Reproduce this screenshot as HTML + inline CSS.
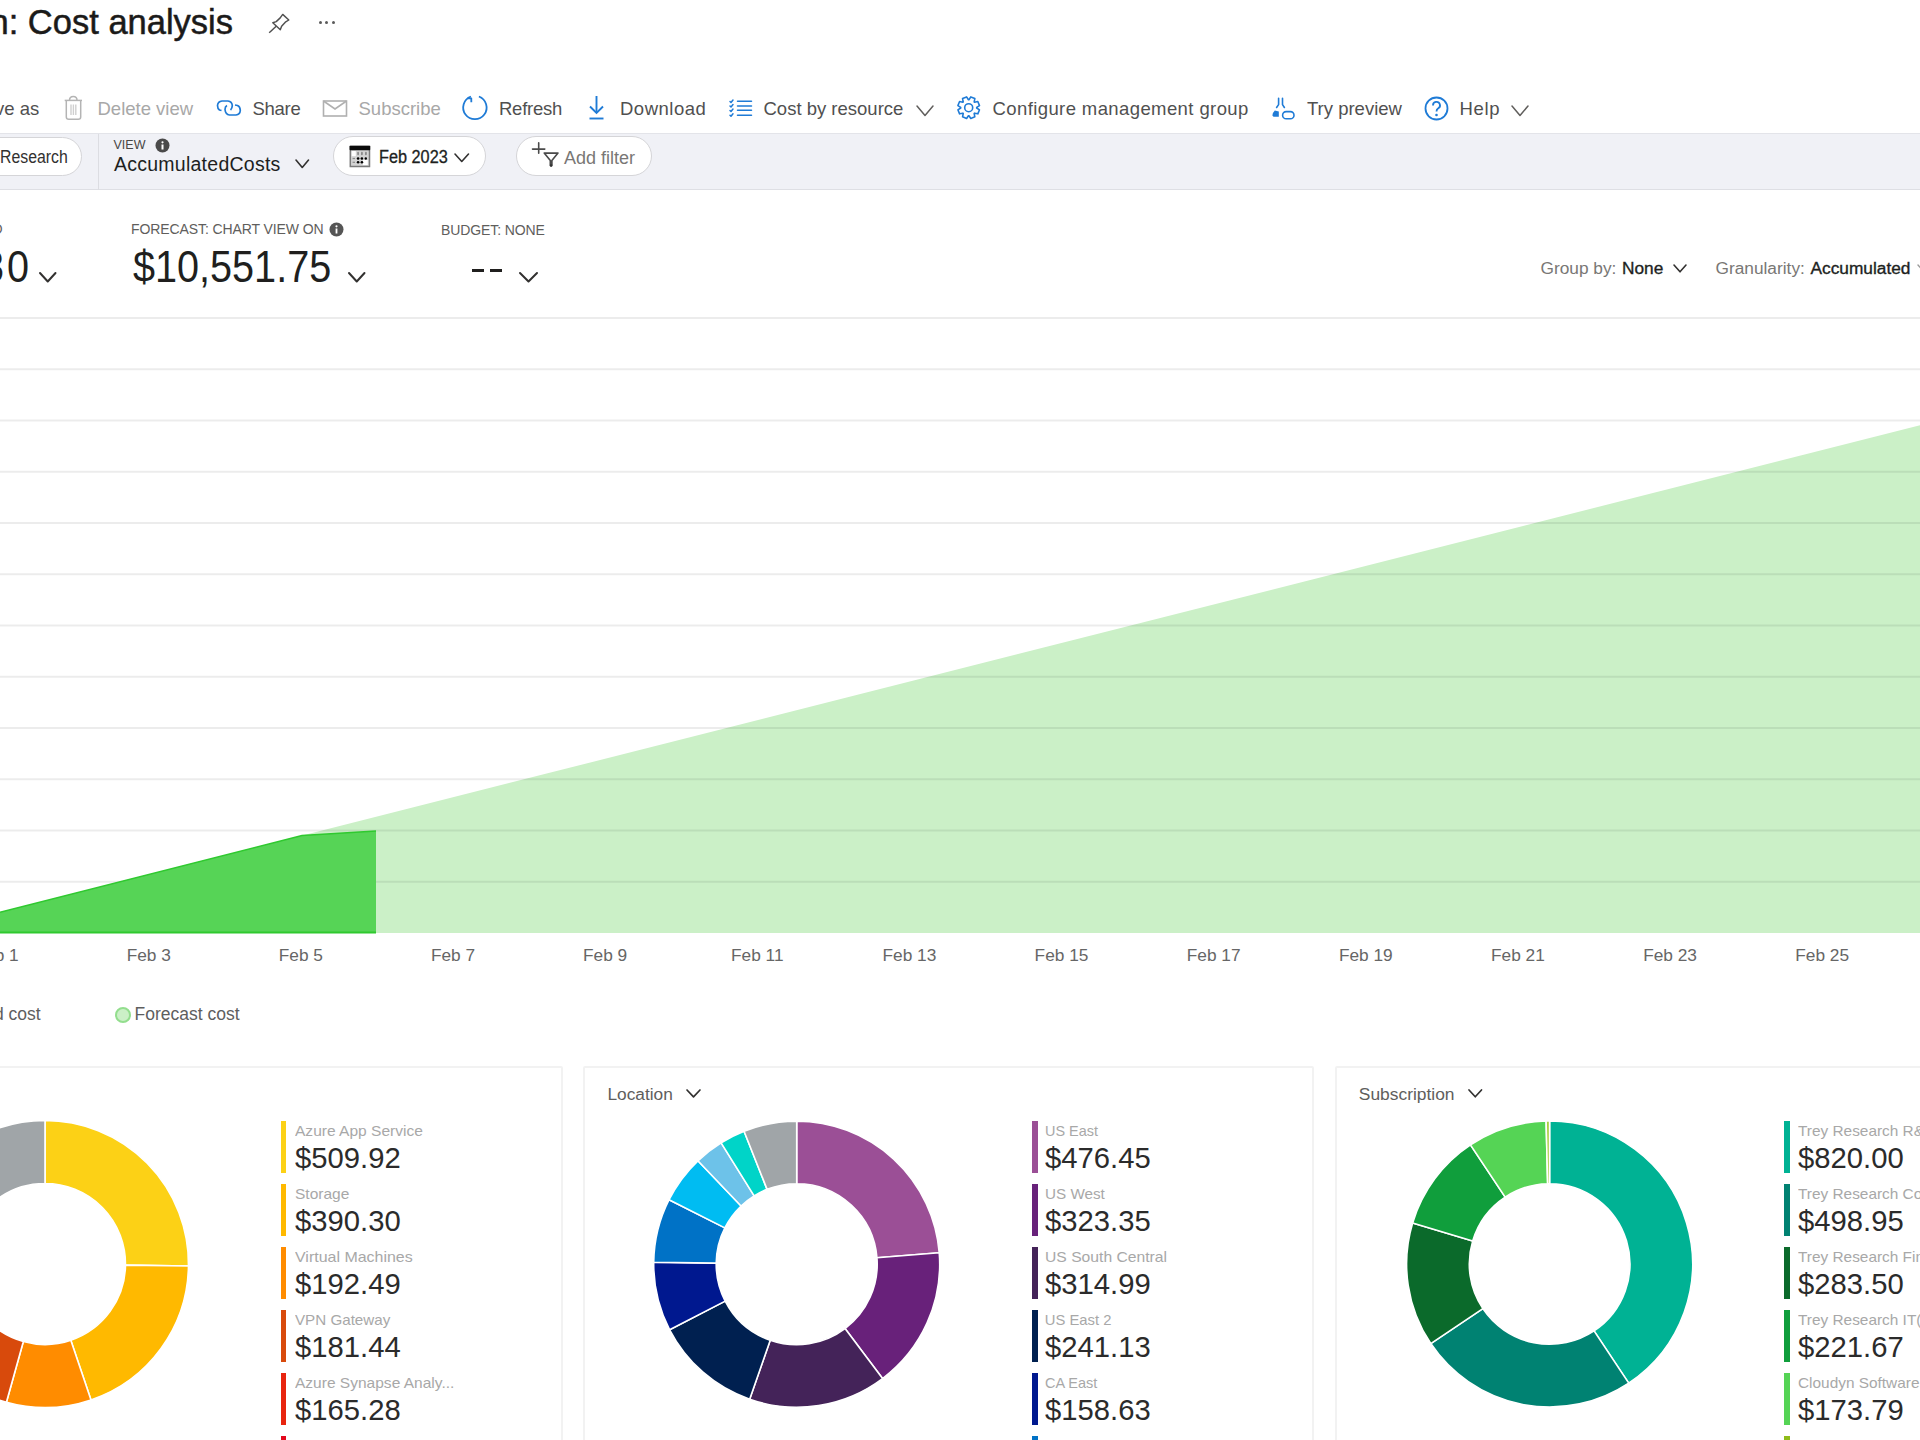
<!DOCTYPE html><html><head><meta charset="utf-8"><style>
html,body{margin:0;padding:0;width:1920px;height:1440px;overflow:hidden;background:#fff;}
body{position:relative;font-family:"Liberation Sans", sans-serif;}
.a{position:absolute;white-space:nowrap;}
svg.a{overflow:visible;}
</style></head><body>
<div class="a " style="left:-10.50px;top:4.50px;font-size:34.5px;line-height:34.5px;color:#1b1a19;font-weight:400;letter-spacing:0px;-webkit-text-stroke:0.5px #1b1a19;">n: Cost analysis</div>
<svg class="a" style="left:266px;top:12px;" width="26" height="24" viewBox="0 0 26 24"><g fill="none" stroke="#505050" stroke-width="1.45" stroke-linejoin="round"><path d="M16.7 2.4 L22.8 8 L19.3 10.2 L15.6 14.3 L14.3 17.8 L6.8 10.8 L10.2 9.6 L14.2 5.9 Z"/><path d="M10.2 14.2 L3.2 20.8"/></g></svg>
<div class="a" style="left:318.7px;top:21.3px;width:3px;height:3px;border-radius:50%;background:#5a5a5a"></div>
<div class="a" style="left:325.3px;top:21.3px;width:3px;height:3px;border-radius:50%;background:#5a5a5a"></div>
<div class="a" style="left:331.9px;top:21.3px;width:3px;height:3px;border-radius:50%;background:#5a5a5a"></div>
<div class="a " style="left:-5.00px;top:100.09px;font-size:18.5px;line-height:18.5px;color:#505050;font-weight:400;letter-spacing:0px;">ve as</div>
<svg class="a" style="left:62px;top:95px;" width="22" height="26" viewBox="0 0 22 26"><g fill="none" stroke="#b4b4b4" stroke-width="1.5"><path d="M2.7 5.4 H20"/><path d="M7.5 5.4 Q7.5 1.5 11.3 1.5 Q15 1.5 15 5.4"/><path d="M4.3 5.4 V22 Q4.3 24.3 6.8 24.3 H16.2 Q18.7 24.3 18.7 22 V5.4"/></g><g stroke="#cfcfcf" stroke-width="1.4"><path d="M9 9.5 V20 M11.4 9.5 V20 M13.8 9.5 V20"/></g></svg>
<div class="a " style="left:97.50px;top:100.09px;font-size:18.5px;line-height:18.5px;color:#a8a8a8;font-weight:400;letter-spacing:0px;">Delete view</div>
<svg class="a" style="left:214px;top:97px;" width="30" height="22" viewBox="0 0 30 22"><g fill="none" stroke="#1f7bd6" stroke-width="1.7" stroke-linejoin="round"><path d="M7.5 13.5 L5.5 13 Q3.5 11.5 3.5 8.5 Q3.8 4.5 8 4 H14 Q18 4.5 18.3 8.5 Q18.2 11.5 16.5 13"/><path d="M13 8.5 Q11 9.5 11 12.5 Q11.5 17.5 15.5 18 H22 Q26 17.5 26.3 13.5 Q26.2 9.5 23.5 8.5 L21 8"/></g></svg>
<div class="a " style="left:252.50px;top:100.09px;font-size:18.5px;line-height:18.5px;color:#505050;font-weight:400;letter-spacing:-0.3px;">Share</div>
<svg class="a" style="left:322px;top:99px;" width="27" height="19" viewBox="0 0 27 19"><g fill="none" stroke="#b0b0b0" stroke-width="1.6"><rect x="1.5" y="2" width="23" height="15"/><path d="M1.5 2 L13 10 L24.5 2"/></g></svg>
<div class="a " style="left:358.50px;top:100.09px;font-size:18.5px;line-height:18.5px;color:#a8a8a8;font-weight:400;letter-spacing:0px;">Subscribe</div>
<svg class="a" style="left:460px;top:94px;" width="30" height="28" viewBox="0 0 30 28"><g fill="none" stroke="#1f7bd6" stroke-width="1.8" stroke-linejoin="round"><path d="M18.9 2.5 A11.7 11.7 0 1 1 10.9 2.5"/><path d="M7.6 4.3 H11.3 V8.3"/></g></svg>
<div class="a " style="left:499.00px;top:100.09px;font-size:18.5px;line-height:18.5px;color:#505050;font-weight:400;letter-spacing:-0.25px;">Refresh</div>
<svg class="a" style="left:586px;top:94px;" width="22" height="28" viewBox="0 0 22 28"><g fill="none" stroke="#1f7bd6" stroke-width="1.9"><path d="M10.5 2 V19"/><path d="M4 12.5 L10.5 19 L17 12.5"/><path d="M3.5 24.5 H17.5"/></g></svg>
<div class="a " style="left:620.00px;top:100.09px;font-size:18.5px;line-height:18.5px;color:#505050;font-weight:400;letter-spacing:0.5px;">Download</div>
<svg class="a" style="left:728px;top:98px;" width="26" height="20" viewBox="0 0 26 20"><g fill="none" stroke="#1f7bd6" stroke-width="1.5" stroke-linecap="round" stroke-linejoin="round"><path d="M9.5 3.3 H23.5 M9.5 7.9 H23.5 M9.5 12.2 H23.5 M9.5 17.2 H23.5"/><path d="M2 3.5 L3 4.5 L5 2 M2 8 L3 9 L5 6.5 M2 12.5 L3 13.5 L5 11 M2 17.3 L3 18.3 L5 15.8"/></g></svg>
<div class="a " style="left:763.50px;top:100.09px;font-size:18.5px;line-height:18.5px;color:#505050;font-weight:400;letter-spacing:0px;">Cost by resource</div>
<svg class="a" style="left:915px;top:104px;" width="20" height="13.5" viewBox="0 0 20 13.5"><polyline points="2,2 10.00,11.50 18.00,2" fill="none" stroke="#605e5c" stroke-width="1.5" stroke-linecap="round" stroke-linejoin="round"/></svg>
<svg class="a" style="left:956px;top:96px;" width="24" height="24" viewBox="0 0 24 24"><g fill="none" stroke="#1f7bd6" stroke-width="1.6" stroke-linejoin="round"><polygon points="23.50,13.81 21.82,17.84 18.54,17.17 18.17,17.54 18.84,20.82 14.81,22.50 12.96,19.70 12.44,19.70 10.59,22.50 6.56,20.82 7.23,17.54 6.86,17.17 3.58,17.84 1.90,13.81 4.70,11.96 4.70,11.44 1.90,9.59 3.58,5.56 6.86,6.23 7.23,5.86 6.56,2.58 10.59,0.90 12.44,3.70 12.96,3.70 14.81,0.90 18.84,2.58 18.17,5.86 18.54,6.23 21.82,5.56 23.50,9.59 20.70,11.44 20.70,11.96"/><circle cx="12.7" cy="11.7" r="4"/></g></svg>
<div class="a " style="left:992.50px;top:100.09px;font-size:18.5px;line-height:18.5px;color:#505050;font-weight:400;letter-spacing:0.4px;">Configure management group</div>
<svg class="a" style="left:1269px;top:94px;" width="30" height="28" viewBox="0 0 30 28"><g fill="none" stroke="#1f7bd6" stroke-width="1.6" stroke-linecap="round" stroke-linejoin="round"><path d="M9.6 4.2 V10.6 L7.6 13.5"/><path d="M13.5 4.2 V10.6 L15.4 13.5"/><rect x="13.6" y="17.6" width="11.4" height="7.2" rx="3.6"/></g><path d="M3.4 21.5 Q3.6 18.5 5.8 16.5 L9.8 17.5 L9.8 22.8 L4.5 22.8 Z" fill="#1f7bd6"/></svg>
<div class="a " style="left:1307.00px;top:100.09px;font-size:18.5px;line-height:18.5px;color:#505050;font-weight:400;letter-spacing:0px;">Try preview</div>
<svg class="a" style="left:1424px;top:96px;" width="25" height="25" viewBox="0 0 25 25"><g fill="none" stroke="#1f7bd6" stroke-width="1.8"><circle cx="12.5" cy="12.5" r="11"/><path d="M9 9.5 A3.5 3.5 0 1 1 14 12.5 Q12.5 13.5 12.5 15.5"/></g><circle cx="12.5" cy="19" r="1.3" fill="#1f7bd6"/></svg>
<div class="a " style="left:1459.50px;top:100.09px;font-size:18.5px;line-height:18.5px;color:#505050;font-weight:400;letter-spacing:0.7px;">Help</div>
<svg class="a" style="left:1510px;top:104px;" width="20" height="13.5" viewBox="0 0 20 13.5"><polyline points="2,2 10.00,11.50 18.00,2" fill="none" stroke="#605e5c" stroke-width="1.5" stroke-linecap="round" stroke-linejoin="round"/></svg>
<div class="a" style="left:0;top:133px;width:1920px;height:57px;background:#f0f1f6;border-top:1px solid #e3e4e9;border-bottom:1.5px solid #dedfe4;box-sizing:border-box"></div>
<div class="a" style="left:-40px;top:136.5px;width:122px;height:39px;border-radius:20px;background:#fff;border:1.5px solid #d5d5d8;box-sizing:border-box"></div>
<div class="a " style="left:-0.50px;top:148.69px;font-size:17.5px;line-height:17.5px;color:#323130;font-weight:400;letter-spacing:0px;transform:scaleX(0.905);transform-origin:0 0;">Research</div>
<div class="a" style="left:97.5px;top:134px;width:1.5px;height:56px;background:#dcdde2"></div>
<div class="a " style="left:113.50px;top:138.92px;font-size:12.5px;line-height:12.5px;color:#484644;font-weight:400;letter-spacing:0px;">VIEW</div>
<svg class="a" style="left:155px;top:138px;" width="15" height="15" viewBox="0 0 15 15"><circle cx="7.5" cy="7.5" r="7" fill="#4a4a4a"/><rect x="6.5" y="6.5" width="2" height="5" fill="#fff"/><circle cx="7.5" cy="4.3" r="1.1" fill="#fff"/></svg>
<div class="a " style="left:114.00px;top:154.79px;font-size:19.5px;line-height:19.5px;color:#201f1e;font-weight:400;letter-spacing:0.25px;">AccumulatedCosts</div>
<svg class="a" style="left:294px;top:158px;" width="16.5" height="11.5" viewBox="0 0 16.5 11.5"><polyline points="2,2 8.25,9.50 14.50,2" fill="none" stroke="#323130" stroke-width="1.6" stroke-linecap="round" stroke-linejoin="round"/></svg>
<div class="a" style="left:333px;top:136.3px;width:152.5px;height:40px;border-radius:20px;background:#fff;border:1.5px solid #d5d5d8;box-sizing:border-box"></div>
<svg class="a" style="left:349px;top:145px;" width="22" height="22" viewBox="0 0 22 22"><rect x="1.3" y="1.5" width="19.2" height="20" fill="#d4d4d4" stroke="#7a7a7a" stroke-width="1.5"/><rect x="0.6" y="0.8" width="20.6" height="4.4" rx="0.8" fill="#0a0a0a"/><rect x="2.8" y="6" width="4" height="5.2" fill="#fff"/><rect x="13.8" y="15" width="5" height="5" fill="#fff"/><g fill="#8a8a8a"><rect x="8.2" y="6.8" width="1.8" height="3.4" rx="0.9"/><rect x="12" y="6.8" width="1.8" height="3.4" rx="0.9"/><rect x="16" y="6.8" width="1.8" height="3.4" rx="0.9"/><rect x="3.6" y="12.9" width="2.4" height="1.2"/><rect x="3.6" y="16.7" width="2.4" height="1.2"/></g><g fill="#000"><circle cx="9.1" cy="13.5" r="1.3"/><circle cx="12.9" cy="13.5" r="1.3"/><circle cx="16.8" cy="13.5" r="1.2"/><circle cx="9.1" cy="17.3" r="1.3"/><circle cx="12.9" cy="17.3" r="1.3"/></g></svg>
<div class="a " style="left:378.50px;top:148.99px;font-size:17.5px;line-height:17.5px;color:#201f1e;font-weight:400;letter-spacing:0px;transform:scaleX(0.93);transform-origin:0 0;-webkit-text-stroke:0.3px #201f1e;">Feb 2023</div>
<svg class="a" style="left:453px;top:151.5px;" width="17.5" height="11.5" viewBox="0 0 17.5 11.5"><polyline points="2,2 8.75,9.50 15.50,2" fill="none" stroke="#323130" stroke-width="1.6" stroke-linecap="round" stroke-linejoin="round"/></svg>
<div class="a" style="left:515.5px;top:136.3px;width:136.5px;height:40px;border-radius:20px;background:#fff;border:1.5px solid #d5d5d8;box-sizing:border-box"></div>
<svg class="a" style="left:531px;top:141px;" width="30" height="27" viewBox="0 0 30 27"><g fill="none" stroke="#4a4a4a" stroke-width="1.6" stroke-linejoin="round" stroke-linecap="round"><path d="M7.7 1.8 V12.3 M1.5 8.1 H13.8"/><path d="M13.2 12.1 H27 L20.9 19.6 L20.9 24 M13.2 12.1 L19.3 19.6 V24"/></g><circle cx="20.1" cy="24.6" r="1.4" fill="#333"/></svg>
<div class="a " style="left:564.00px;top:148.56px;font-size:18px;line-height:18px;color:#797775;font-weight:400;letter-spacing:0px;">Add filter</div>
<div class="a " style="left:-7.50px;top:222.15px;font-size:14px;line-height:14px;color:#605e5c;font-weight:400;letter-spacing:0px;">D</div>
<div class="a " style="left:-18.50px;top:244.75px;font-size:44px;line-height:44px;color:#201f1e;font-weight:400;letter-spacing:0px;transform:scaleX(0.9);transform-origin:0 0;">3</div>
<div class="a " style="left:6.70px;top:244.75px;font-size:44px;line-height:44px;color:#201f1e;font-weight:400;letter-spacing:0px;transform:scaleX(0.9);transform-origin:0 0;">0</div>
<svg class="a" style="left:38px;top:271px;" width="19.5" height="12.5" viewBox="0 0 19.5 12.5"><polyline points="2,2 9.75,10.50 17.50,2" fill="none" stroke="#323130" stroke-width="2" stroke-linecap="round" stroke-linejoin="round"/></svg>
<div class="a " style="left:131.00px;top:222.15px;font-size:14px;line-height:14px;color:#605e5c;font-weight:400;letter-spacing:-0.1px;">FORECAST: CHART VIEW ON</div>
<svg class="a" style="left:329px;top:222px;" width="15" height="15" viewBox="0 0 15 15"><circle cx="7.5" cy="7.5" r="7" fill="#555"/><rect x="6.6" y="6.5" width="1.8" height="5" fill="#fff"/><circle cx="7.5" cy="4.3" r="1.1" fill="#fff"/></svg>
<div class="a " style="left:132.50px;top:244.75px;font-size:44px;line-height:44px;color:#201f1e;font-weight:400;letter-spacing:0px;transform:scaleX(0.9);transform-origin:0 0;">$10,551.75</div>
<svg class="a" style="left:347px;top:271px;" width="19.5" height="12.5" viewBox="0 0 19.5 12.5"><polyline points="2,2 9.75,10.50 17.50,2" fill="none" stroke="#323130" stroke-width="2" stroke-linecap="round" stroke-linejoin="round"/></svg>
<div class="a " style="left:441.00px;top:223.15px;font-size:14px;line-height:14px;color:#605e5c;font-weight:400;letter-spacing:-0.1px;">BUDGET: NONE</div>
<div class="a" style="left:472px;top:269px;width:12px;height:2.5px;background:#201f1e"></div>
<div class="a" style="left:490px;top:269px;width:12px;height:2.5px;background:#201f1e"></div>
<svg class="a" style="left:518px;top:271px;" width="21" height="12.5" viewBox="0 0 21 12.5"><polyline points="2,2 10.50,10.50 19.00,2" fill="none" stroke="#323130" stroke-width="2" stroke-linecap="round" stroke-linejoin="round"/></svg>
<div class="a " style="left:1540.50px;top:259.96px;font-size:17.3px;line-height:17.3px;color:#797775;font-weight:400;letter-spacing:0px;">Group by:</div>
<div class="a " style="left:1622.00px;top:259.96px;font-size:17.3px;line-height:17.3px;color:#201f1e;font-weight:400;letter-spacing:0px;-webkit-text-stroke:0.35px #201f1e;">None</div>
<svg class="a" style="left:1671.5px;top:263px;" width="16.0" height="10.800000000000011" viewBox="0 0 16.0 10.800000000000011"><polyline points="2,2 8.00,8.80 14.00,2" fill="none" stroke="#323130" stroke-width="1.6" stroke-linecap="round" stroke-linejoin="round"/></svg>
<div class="a " style="left:1715.50px;top:259.96px;font-size:17.3px;line-height:17.3px;color:#797775;font-weight:400;letter-spacing:0px;">Granularity:</div>
<svg class="a" style="left:1915.5px;top:263px;" width="16.0" height="10.800000000000011" viewBox="0 0 16.0 10.800000000000011"><polyline points="2,2 8.00,8.80 14.00,2" fill="none" stroke="#9a9a9a" stroke-width="1.4" stroke-linecap="round" stroke-linejoin="round"/></svg>
<div class="a " style="left:1810.50px;top:259.96px;font-size:17.3px;line-height:17.3px;color:#201f1e;font-weight:400;letter-spacing:0px;-webkit-text-stroke:0.35px #201f1e;">Accumulated</div>
<svg class="a" style="left:0;top:0" width="1920" height="1440">
<polygon points="0,933 0,912.2 1920,425.3 1920,933" fill="#cbf0c7"/>
<rect x="0" y="317.00" width="1920" height="2" fill="rgba(0,0,0,0.075)"/><rect x="0" y="368.25" width="1920" height="2" fill="rgba(0,0,0,0.075)"/><rect x="0" y="419.50" width="1920" height="2" fill="rgba(0,0,0,0.075)"/><rect x="0" y="470.75" width="1920" height="2" fill="rgba(0,0,0,0.075)"/><rect x="0" y="522.00" width="1920" height="2" fill="rgba(0,0,0,0.075)"/><rect x="0" y="573.25" width="1920" height="2" fill="rgba(0,0,0,0.075)"/><rect x="0" y="624.50" width="1920" height="2" fill="rgba(0,0,0,0.075)"/><rect x="0" y="675.75" width="1920" height="2" fill="rgba(0,0,0,0.075)"/><rect x="0" y="727.00" width="1920" height="2" fill="rgba(0,0,0,0.075)"/><rect x="0" y="778.25" width="1920" height="2" fill="rgba(0,0,0,0.075)"/><rect x="0" y="829.50" width="1920" height="2" fill="rgba(0,0,0,0.075)"/><rect x="0" y="880.75" width="1920" height="2" fill="rgba(0,0,0,0.075)"/>
<polygon points="0,933 0,912.2 302,835.6 376,831 376,933" fill="#56d456"/>
<polyline points="0,912.2 302,835.6 376,831" fill="none" stroke="#2fc92f" stroke-width="1.5"/>
<line x1="0" y1="932.5" x2="376" y2="932.5" stroke="#2fc92f" stroke-width="2"/>
</svg>
<div class="a" style="left:-63.38px;top:947.21px;width:120px;text-align:center;font-size:17.3px;line-height:17px;color:#666">Feb 1</div>
<div class="a" style="left:88.75px;top:947.21px;width:120px;text-align:center;font-size:17.3px;line-height:17px;color:#666">Feb 3</div>
<div class="a" style="left:240.88px;top:947.21px;width:120px;text-align:center;font-size:17.3px;line-height:17px;color:#666">Feb 5</div>
<div class="a" style="left:393.01px;top:947.21px;width:120px;text-align:center;font-size:17.3px;line-height:17px;color:#666">Feb 7</div>
<div class="a" style="left:545.14px;top:947.21px;width:120px;text-align:center;font-size:17.3px;line-height:17px;color:#666">Feb 9</div>
<div class="a" style="left:697.27px;top:947.21px;width:120px;text-align:center;font-size:17.3px;line-height:17px;color:#666">Feb 11</div>
<div class="a" style="left:849.40px;top:947.21px;width:120px;text-align:center;font-size:17.3px;line-height:17px;color:#666">Feb 13</div>
<div class="a" style="left:1001.53px;top:947.21px;width:120px;text-align:center;font-size:17.3px;line-height:17px;color:#666">Feb 15</div>
<div class="a" style="left:1153.66px;top:947.21px;width:120px;text-align:center;font-size:17.3px;line-height:17px;color:#666">Feb 17</div>
<div class="a" style="left:1305.79px;top:947.21px;width:120px;text-align:center;font-size:17.3px;line-height:17px;color:#666">Feb 19</div>
<div class="a" style="left:1457.92px;top:947.21px;width:120px;text-align:center;font-size:17.3px;line-height:17px;color:#666">Feb 21</div>
<div class="a" style="left:1610.05px;top:947.21px;width:120px;text-align:center;font-size:17.3px;line-height:17px;color:#666">Feb 23</div>
<div class="a" style="left:1762.18px;top:947.21px;width:120px;text-align:center;font-size:17.3px;line-height:17px;color:#666">Feb 25</div>
<div class="a " style="left:-6.00px;top:1005.69px;font-size:17.5px;line-height:17.5px;color:#5e5e5e;font-weight:400;letter-spacing:0px;">d cost</div>
<div class="a" style="left:114.7px;top:1006.7px;width:16px;height:16px;border-radius:50%;background:#cbf0c7;border:2px solid #93de8e;box-sizing:border-box"></div>
<div class="a " style="left:134.50px;top:1005.69px;font-size:17.5px;line-height:17.5px;color:#5e5e5e;font-weight:400;letter-spacing:0px;">Forecast cost</div>
<div class="a" style="left:-20px;top:1065.6px;width:582.5px;height:420px;border:2px solid #f2f2f2;border-radius:2px;box-sizing:border-box"></div>
<div class="a" style="left:583.3px;top:1065.6px;width:730.4000000000001px;height:420px;border:2px solid #f2f2f2;border-radius:2px;box-sizing:border-box"></div>
<div class="a" style="left:1334.6px;top:1065.6px;width:625.4000000000001px;height:420px;border:2px solid #f2f2f2;border-radius:2px;box-sizing:border-box"></div>
<div class="a " style="left:607.50px;top:1085.96px;font-size:17.3px;line-height:17.3px;color:#605e5c;font-weight:400;letter-spacing:0px;">Location</div>
<svg class="a" style="left:684.5px;top:1088px;" width="17.0" height="10.799999999999955" viewBox="0 0 17.0 10.799999999999955"><polyline points="2,2 8.50,8.80 15.00,2" fill="none" stroke="#323130" stroke-width="1.7" stroke-linecap="round" stroke-linejoin="round"/></svg>
<div class="a " style="left:1358.80px;top:1085.67px;font-size:17.4px;line-height:17.4px;color:#605e5c;font-weight:400;letter-spacing:0px;">Subscription</div>
<svg class="a" style="left:1466.5px;top:1088px;" width="16.5" height="10.799999999999955" viewBox="0 0 16.5 10.799999999999955"><polyline points="2,2 8.25,8.80 14.50,2" fill="none" stroke="#323130" stroke-width="1.7" stroke-linecap="round" stroke-linejoin="round"/></svg>
<svg class="a" style="left:0;top:0" width="1920" height="1440"><path d="M45.00 1120.50 A143.5 143.5 0 0 1 188.49 1266.00 L125.49 1265.12 A80.5 80.5 0 0 0 45.00 1183.50 Z" fill="#fcd116" stroke="#fff" stroke-width="1.6" stroke-linejoin="bevel"/><path d="M188.49 1266.00 A143.5 143.5 0 0 1 91.01 1399.92 L70.81 1340.25 A80.5 80.5 0 0 0 125.49 1265.12 Z" fill="#ffb900" stroke="#fff" stroke-width="1.6" stroke-linejoin="bevel"/><path d="M91.01 1399.92 A143.5 143.5 0 0 1 6.41 1402.21 L23.35 1341.53 A80.5 80.5 0 0 0 70.81 1340.25 Z" fill="#ff8c00" stroke="#fff" stroke-width="1.6" stroke-linejoin="bevel"/><path d="M6.41 1402.21 A143.5 143.5 0 0 1 -61.64 1360.02 L-14.82 1317.87 A80.5 80.5 0 0 0 23.35 1341.53 Z" fill="#d84a0c" stroke="#fff" stroke-width="1.6" stroke-linejoin="bevel"/><path d="M-61.64 1360.02 A143.5 143.5 0 0 1 -95.36 1293.84 L-33.74 1280.74 A80.5 80.5 0 0 0 -14.82 1317.87 Z" fill="#e8250f" stroke="#fff" stroke-width="1.6" stroke-linejoin="bevel"/><path d="M-95.36 1293.84 A143.5 143.5 0 0 1 -96.32 1239.08 L-34.28 1250.02 A80.5 80.5 0 0 0 -33.74 1280.74 Z" fill="#a80000" stroke="#fff" stroke-width="1.6" stroke-linejoin="bevel"/><path d="M-96.32 1239.08 A143.5 143.5 0 0 1 -79.27 1192.25 L-24.72 1223.75 A80.5 80.5 0 0 0 -34.28 1250.02 Z" fill="#b4009e" stroke="#fff" stroke-width="1.6" stroke-linejoin="bevel"/><path d="M-79.27 1192.25 A143.5 143.5 0 0 1 -51.02 1157.36 L-8.87 1204.18 A80.5 80.5 0 0 0 -24.72 1223.75 Z" fill="#5c2d91" stroke="#fff" stroke-width="1.6" stroke-linejoin="bevel"/><path d="M-51.02 1157.36 A143.5 143.5 0 0 1 45.00 1120.50 L45.00 1183.50 A80.5 80.5 0 0 0 -8.87 1204.18 Z" fill="#a0a5a8" stroke="#fff" stroke-width="1.6" stroke-linejoin="bevel"/><path d="M796.70 1121.20 A143 143 0 0 1 939.24 1252.73 L876.94 1257.74 A80.5 80.5 0 0 0 796.70 1183.70 Z" fill="#9b4f96" stroke="#fff" stroke-width="1.6" stroke-linejoin="bevel"/><path d="M939.24 1252.73 A143 143 0 0 1 882.56 1378.55 L845.03 1328.57 A80.5 80.5 0 0 0 876.94 1257.74 Z" fill="#68217a" stroke="#fff" stroke-width="1.6" stroke-linejoin="bevel"/><path d="M882.56 1378.55 A143 143 0 0 1 749.67 1399.25 L770.23 1340.22 A80.5 80.5 0 0 0 845.03 1328.57 Z" fill="#442359" stroke="#fff" stroke-width="1.6" stroke-linejoin="bevel"/><path d="M749.67 1399.25 A143 143 0 0 1 669.63 1329.79 L725.17 1301.12 A80.5 80.5 0 0 0 770.23 1340.22 Z" fill="#002050" stroke="#fff" stroke-width="1.6" stroke-linejoin="bevel"/><path d="M669.63 1329.79 A143 143 0 0 1 653.71 1262.20 L716.21 1263.08 A80.5 80.5 0 0 0 725.17 1301.12 Z" fill="#00188f" stroke="#fff" stroke-width="1.6" stroke-linejoin="bevel"/><path d="M653.71 1262.20 A143 143 0 0 1 669.06 1199.72 L724.85 1227.90 A80.5 80.5 0 0 0 716.21 1263.08 Z" fill="#0072c6" stroke="#fff" stroke-width="1.6" stroke-linejoin="bevel"/><path d="M669.06 1199.72 A143 143 0 0 1 697.90 1160.82 L741.08 1206.00 A80.5 80.5 0 0 0 724.85 1227.90 Z" fill="#00bcf2" stroke="#fff" stroke-width="1.6" stroke-linejoin="bevel"/><path d="M697.90 1160.82 A143 143 0 0 1 721.13 1142.80 L754.16 1195.86 A80.5 80.5 0 0 0 741.08 1206.00 Z" fill="#6dc2e9" stroke="#fff" stroke-width="1.6" stroke-linejoin="bevel"/><path d="M721.13 1142.80 A143 143 0 0 1 744.06 1131.24 L767.07 1189.35 A80.5 80.5 0 0 0 754.16 1195.86 Z" fill="#00d4c8" stroke="#fff" stroke-width="1.6" stroke-linejoin="bevel"/><path d="M744.06 1131.24 A143 143 0 0 1 796.70 1121.20 L796.70 1183.70 A80.5 80.5 0 0 0 767.07 1189.35 Z" fill="#a0a5a8" stroke="#fff" stroke-width="1.6" stroke-linejoin="bevel"/><path d="M1549.60 1121.00 A143 143 0 0 1 1628.73 1383.11 L1594.04 1330.88 A80.3 80.3 0 0 0 1549.60 1183.70 Z" fill="#00b294" stroke="#fff" stroke-width="1.6" stroke-linejoin="bevel"/><path d="M1628.73 1383.11 A143 143 0 0 1 1430.77 1343.55 L1482.87 1308.67 A80.3 80.3 0 0 0 1594.04 1330.88 Z" fill="#008272" stroke="#fff" stroke-width="1.6" stroke-linejoin="bevel"/><path d="M1430.77 1343.55 A143 143 0 0 1 1412.63 1222.91 L1472.69 1240.92 A80.3 80.3 0 0 0 1482.87 1308.67 Z" fill="#0b6a2b" stroke="#fff" stroke-width="1.6" stroke-linejoin="bevel"/><path d="M1412.63 1222.91 A143 143 0 0 1 1470.47 1144.89 L1505.16 1197.12 A80.3 80.3 0 0 0 1472.69 1240.92 Z" fill="#109e3c" stroke="#fff" stroke-width="1.6" stroke-linejoin="bevel"/><path d="M1470.47 1144.89 A143 143 0 0 1 1546.11 1121.04 L1547.64 1183.72 A80.3 80.3 0 0 0 1505.16 1197.12 Z" fill="#55d455" stroke="#fff" stroke-width="1.6" stroke-linejoin="bevel"/><path d="M1546.11 1121.04 A143 143 0 0 1 1549.60 1121.00 L1549.60 1183.70 A80.3 80.3 0 0 0 1547.64 1183.72 Z" fill="#a9cf3a" stroke="#fff" stroke-width="1.6" stroke-linejoin="bevel"/></svg>
<div class="a" style="left:280.50px;top:1121.25px;width:5.8px;height:52px;background:#fcd116"></div>
<div class="a " style="left:294.50px;top:1123.92px;font-size:14.8px;line-height:14.8px;color:#a8a8a8;font-weight:400;letter-spacing:0px;transform:scaleX(1.051);transform-origin:0 0;">Azure App Service</div>
<div class="a " style="left:295.00px;top:1142.65px;font-size:30px;line-height:30px;color:#2b2b2b;font-weight:400;letter-spacing:0px;transform:scaleX(0.975);transform-origin:0 0;">$509.92</div>
<div class="a" style="left:280.50px;top:1184.25px;width:5.8px;height:52px;background:#ffb900"></div>
<div class="a " style="left:294.50px;top:1186.92px;font-size:14.8px;line-height:14.8px;color:#a8a8a8;font-weight:400;letter-spacing:0px;transform:scaleX(1.048);transform-origin:0 0;">Storage</div>
<div class="a " style="left:295.00px;top:1205.65px;font-size:30px;line-height:30px;color:#2b2b2b;font-weight:400;letter-spacing:0px;transform:scaleX(0.975);transform-origin:0 0;">$390.30</div>
<div class="a" style="left:280.50px;top:1247.25px;width:5.8px;height:52px;background:#ff8c00"></div>
<div class="a " style="left:294.50px;top:1249.92px;font-size:14.8px;line-height:14.8px;color:#a8a8a8;font-weight:400;letter-spacing:0px;transform:scaleX(1.079);transform-origin:0 0;">Virtual Machines</div>
<div class="a " style="left:295.00px;top:1268.65px;font-size:30px;line-height:30px;color:#2b2b2b;font-weight:400;letter-spacing:0px;transform:scaleX(0.975);transform-origin:0 0;">$192.49</div>
<div class="a" style="left:280.50px;top:1310.25px;width:5.8px;height:52px;background:#d84a0c"></div>
<div class="a " style="left:294.50px;top:1312.92px;font-size:14.8px;line-height:14.8px;color:#a8a8a8;font-weight:400;letter-spacing:0px;transform:scaleX(1.025);transform-origin:0 0;">VPN Gateway</div>
<div class="a " style="left:295.00px;top:1331.65px;font-size:30px;line-height:30px;color:#2b2b2b;font-weight:400;letter-spacing:0px;transform:scaleX(0.975);transform-origin:0 0;">$181.44</div>
<div class="a" style="left:280.50px;top:1373.25px;width:5.8px;height:52px;background:#e8250f"></div>
<div class="a " style="left:294.50px;top:1375.92px;font-size:14.8px;line-height:14.8px;color:#a8a8a8;font-weight:400;letter-spacing:0px;transform:scaleX(1.049);transform-origin:0 0;">Azure Synapse Analy...</div>
<div class="a " style="left:295.00px;top:1394.65px;font-size:30px;line-height:30px;color:#2b2b2b;font-weight:400;letter-spacing:0px;transform:scaleX(0.975);transform-origin:0 0;">$165.28</div>
<div class="a" style="left:280.50px;top:1436.25px;width:5.8px;height:52px;background:#e3081c"></div>
<div class="a " style="left:294.50px;top:1438.92px;font-size:14.8px;line-height:14.8px;color:#a8a8a8;font-weight:400;letter-spacing:0px;transform:scaleX(1.04);transform-origin:0 0;">Azure Monitor</div>
<div class="a" style="left:1032.20px;top:1121.25px;width:5.8px;height:52px;background:#9b4f96"></div>
<div class="a " style="left:1044.80px;top:1123.92px;font-size:14.8px;line-height:14.8px;color:#a8a8a8;font-weight:400;letter-spacing:0px;transform:scaleX(0.976);transform-origin:0 0;">US East</div>
<div class="a " style="left:1045.30px;top:1142.65px;font-size:30px;line-height:30px;color:#2b2b2b;font-weight:400;letter-spacing:0px;transform:scaleX(0.975);transform-origin:0 0;">$476.45</div>
<div class="a" style="left:1032.20px;top:1184.25px;width:5.8px;height:52px;background:#68217a"></div>
<div class="a " style="left:1044.80px;top:1186.92px;font-size:14.8px;line-height:14.8px;color:#a8a8a8;font-weight:400;letter-spacing:0px;transform:scaleX(1.03);transform-origin:0 0;">US West</div>
<div class="a " style="left:1045.30px;top:1205.65px;font-size:30px;line-height:30px;color:#2b2b2b;font-weight:400;letter-spacing:0px;transform:scaleX(0.975);transform-origin:0 0;">$323.35</div>
<div class="a" style="left:1032.20px;top:1247.25px;width:5.8px;height:52px;background:#442359"></div>
<div class="a " style="left:1044.80px;top:1249.92px;font-size:14.8px;line-height:14.8px;color:#a8a8a8;font-weight:400;letter-spacing:0px;transform:scaleX(1.06);transform-origin:0 0;">US South Central</div>
<div class="a " style="left:1045.30px;top:1268.65px;font-size:30px;line-height:30px;color:#2b2b2b;font-weight:400;letter-spacing:0px;transform:scaleX(0.975);transform-origin:0 0;">$314.99</div>
<div class="a" style="left:1032.20px;top:1310.25px;width:5.8px;height:52px;background:#002050"></div>
<div class="a " style="left:1044.80px;top:1312.92px;font-size:14.8px;line-height:14.8px;color:#a8a8a8;font-weight:400;letter-spacing:0px;">US East 2</div>
<div class="a " style="left:1045.30px;top:1331.65px;font-size:30px;line-height:30px;color:#2b2b2b;font-weight:400;letter-spacing:0px;transform:scaleX(0.975);transform-origin:0 0;">$241.13</div>
<div class="a" style="left:1032.20px;top:1373.25px;width:5.8px;height:52px;background:#00188f"></div>
<div class="a " style="left:1044.80px;top:1375.92px;font-size:14.8px;line-height:14.8px;color:#a8a8a8;font-weight:400;letter-spacing:0px;transform:scaleX(0.98);transform-origin:0 0;">CA East</div>
<div class="a " style="left:1045.30px;top:1394.65px;font-size:30px;line-height:30px;color:#2b2b2b;font-weight:400;letter-spacing:0px;transform:scaleX(0.975);transform-origin:0 0;">$158.63</div>
<div class="a" style="left:1032.20px;top:1436.25px;width:5.8px;height:52px;background:#0072c6"></div>
<div class="a " style="left:1044.80px;top:1438.92px;font-size:14.8px;line-height:14.8px;color:#a8a8a8;font-weight:400;letter-spacing:0px;">US Central</div>
<div class="a" style="left:1783.80px;top:1121.25px;width:5.8px;height:52px;background:#00b294"></div>
<div class="a " style="left:1797.50px;top:1123.92px;font-size:14.8px;line-height:14.8px;color:#a8a8a8;font-weight:400;letter-spacing:0px;transform:scaleX(1.04);transform-origin:0 0;">Trey Research R&amp;D</div>
<div class="a " style="left:1798.00px;top:1142.65px;font-size:30px;line-height:30px;color:#2b2b2b;font-weight:400;letter-spacing:0px;transform:scaleX(0.975);transform-origin:0 0;">$820.00</div>
<div class="a" style="left:1783.80px;top:1184.25px;width:5.8px;height:52px;background:#008272"></div>
<div class="a " style="left:1797.50px;top:1186.92px;font-size:14.8px;line-height:14.8px;color:#a8a8a8;font-weight:400;letter-spacing:0px;transform:scaleX(1.04);transform-origin:0 0;">Trey Research Corp</div>
<div class="a " style="left:1798.00px;top:1205.65px;font-size:30px;line-height:30px;color:#2b2b2b;font-weight:400;letter-spacing:0px;transform:scaleX(0.975);transform-origin:0 0;">$498.95</div>
<div class="a" style="left:1783.80px;top:1247.25px;width:5.8px;height:52px;background:#0b6a2b"></div>
<div class="a " style="left:1797.50px;top:1249.92px;font-size:14.8px;line-height:14.8px;color:#a8a8a8;font-weight:400;letter-spacing:0px;transform:scaleX(1.04);transform-origin:0 0;">Trey Research Finance</div>
<div class="a " style="left:1798.00px;top:1268.65px;font-size:30px;line-height:30px;color:#2b2b2b;font-weight:400;letter-spacing:0px;transform:scaleX(0.975);transform-origin:0 0;">$283.50</div>
<div class="a" style="left:1783.80px;top:1310.25px;width:5.8px;height:52px;background:#109e3c"></div>
<div class="a " style="left:1797.50px;top:1312.92px;font-size:14.8px;line-height:14.8px;color:#a8a8a8;font-weight:400;letter-spacing:0px;transform:scaleX(1.04);transform-origin:0 0;">Trey Research IT(e)</div>
<div class="a " style="left:1798.00px;top:1331.65px;font-size:30px;line-height:30px;color:#2b2b2b;font-weight:400;letter-spacing:0px;transform:scaleX(0.975);transform-origin:0 0;">$221.67</div>
<div class="a" style="left:1783.80px;top:1373.25px;width:5.8px;height:52px;background:#55d455"></div>
<div class="a " style="left:1797.50px;top:1375.92px;font-size:14.8px;line-height:14.8px;color:#a8a8a8;font-weight:400;letter-spacing:0px;transform:scaleX(1.04);transform-origin:0 0;">Cloudyn Software</div>
<div class="a " style="left:1798.00px;top:1394.65px;font-size:30px;line-height:30px;color:#2b2b2b;font-weight:400;letter-spacing:0px;transform:scaleX(0.975);transform-origin:0 0;">$173.79</div>
<div class="a" style="left:1783.80px;top:1436.25px;width:5.8px;height:52px;background:#8fbc1a"></div>
<div class="a " style="left:1797.50px;top:1438.92px;font-size:14.8px;line-height:14.8px;color:#a8a8a8;font-weight:400;letter-spacing:0px;transform:scaleX(1.04);transform-origin:0 0;">Trey Research</div>
</body></html>
